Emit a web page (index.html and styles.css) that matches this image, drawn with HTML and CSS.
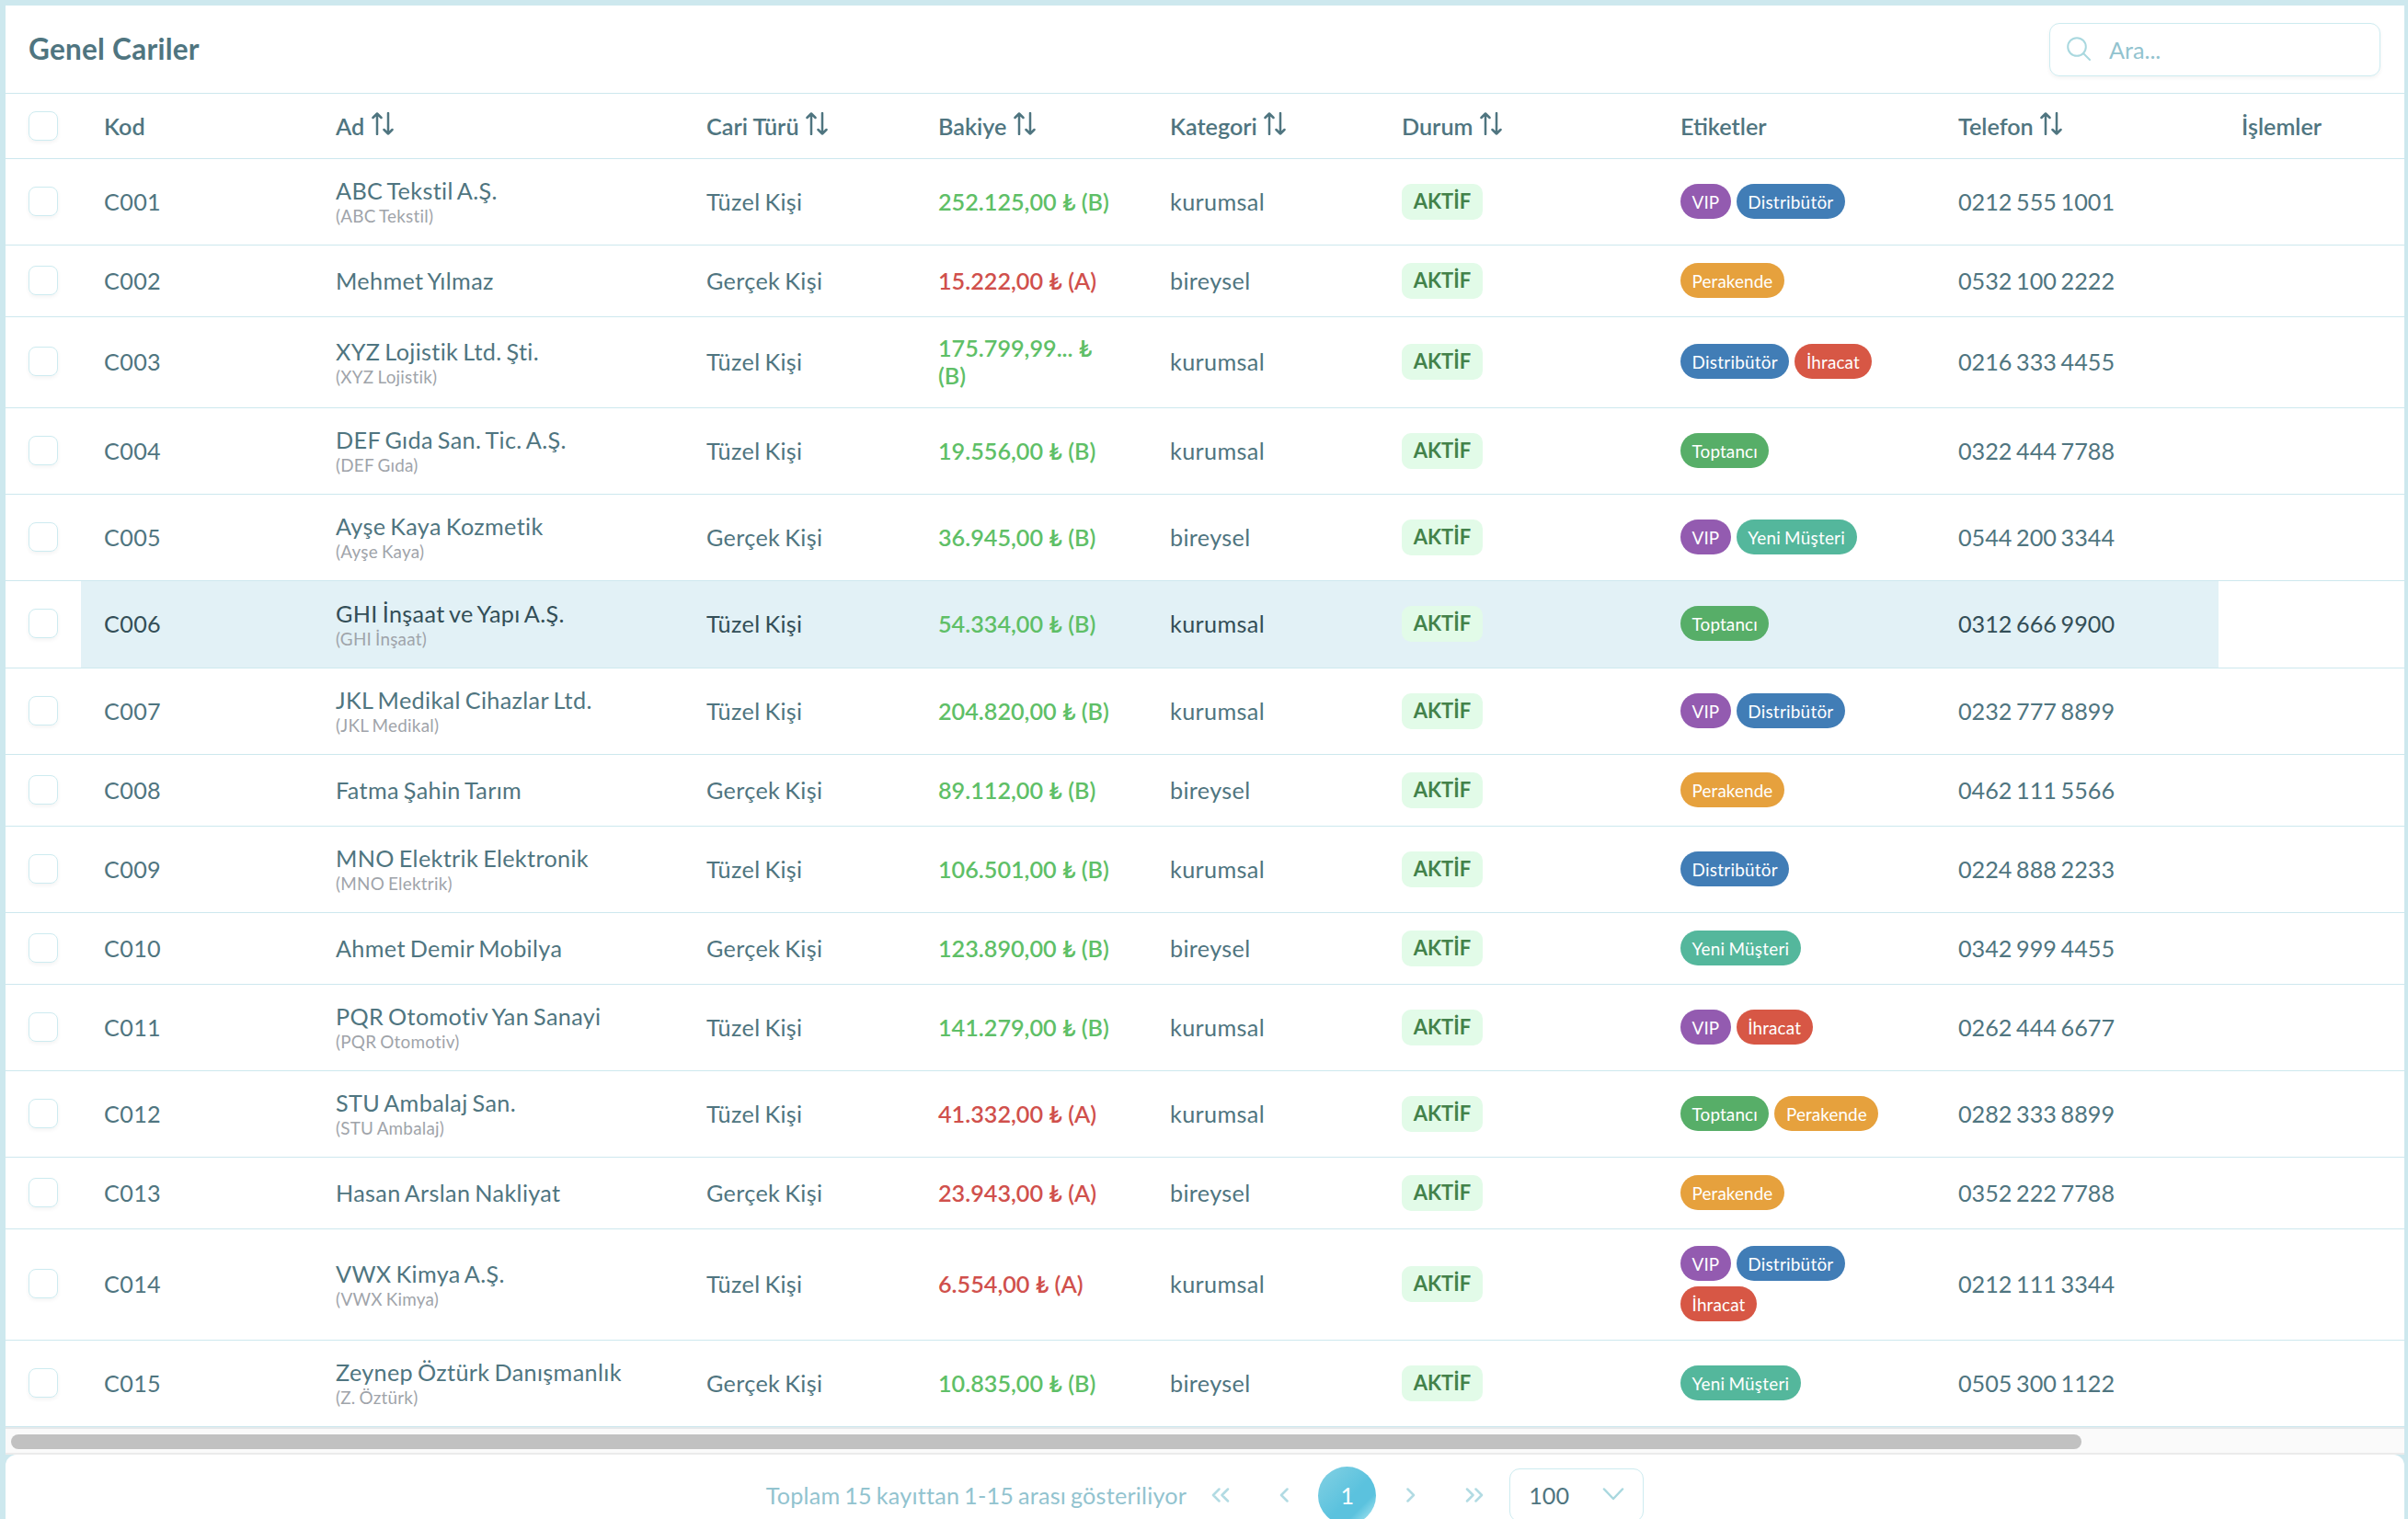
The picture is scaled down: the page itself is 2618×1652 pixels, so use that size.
FILE: index.html
```html
<!DOCTYPE html>
<html lang="tr">
<head>
<meta charset="utf-8">
<title>Genel Cariler</title>
<link rel="stylesheet" href="styles.css">
</head>
<body>
<svg class="defs" aria-hidden="true">
  <symbol id="sort" viewBox="0 0 24 25"><path d="M6 24V1.500M1.500 6L6 1.500 10.500 6M18 1v22.500M13.500 19l4.500 4.500L22.500 19"/></symbol>
</svg>
<main class="panel">
  <header class="toolbar">
    <h1 class="title">Genel Cariler</h1>
    <label class="search">
      <svg class="search-icon" viewBox="0 0 26 26"><circle cx="11" cy="11" r="9.800"/><path d="M18 18l7 7"/></svg>
      <input class="search-input" type="text" placeholder="Ara...">
    </label>
  </header>
  <table class="grid">
    <colgroup><col class="c-check"><col class="c-m"><col class="c-name"><col class="c-m"><col class="c-m"><col class="c-m"><col class="c-status"><col class="c-tags"><col class="c-phone"><col></colgroup>
    <thead>
      <tr><th><span class="check"></span></th><th>Kod</th><th>Ad <svg class="sort"><use href="#sort"/></svg></th><th>Cari Türü <svg class="sort"><use href="#sort"/></svg></th><th>Bakiye <svg class="sort"><use href="#sort"/></svg></th><th>Kategori <svg class="sort"><use href="#sort"/></svg></th><th>Durum <svg class="sort"><use href="#sort"/></svg></th><th>Etiketler</th><th>Telefon <svg class="sort"><use href="#sort"/></svg></th><th>İşlemler</th></tr>
    </thead>
    <tbody>
      <tr><td><span class="check"></span></td><td>C001</td><td class="name">ABC Tekstil A.Ş.<small>(ABC Tekstil)</small></td><td>Tüzel Kişi</td><td class="credit">252.125,00 ₺ (B)</td><td>kurumsal</td><td><span class="status">AKTİF</span></td><td><div class="tags"><span class="tag vip">VIP</span><span class="tag dist">Distribütör</span></div></td><td class="phone">0212 555 1001</td><td></td></tr>
      <tr class="short"><td><span class="check"></span></td><td>C002</td><td>Mehmet Yılmaz</td><td>Gerçek Kişi</td><td class="debit">15.222,00 ₺ (A)</td><td>bireysel</td><td><span class="status">AKTİF</span></td><td><div class="tags"><span class="tag retail">Perakende</span></div></td><td class="phone">0532 100 2222</td><td></td></tr>
      <tr class="wrapped"><td><span class="check"></span></td><td>C003</td><td class="name">XYZ Lojistik Ltd. Şti.<small>(XYZ Lojistik)</small></td><td>Tüzel Kişi</td><td class="credit">175.799,99... ₺ (B)</td><td>kurumsal</td><td><span class="status">AKTİF</span></td><td><div class="tags"><span class="tag dist">Distribütör</span><span class="tag export">İhracat</span></div></td><td class="phone">0216 333 4455</td><td></td></tr>
      <tr><td><span class="check"></span></td><td>C004</td><td class="name">DEF Gıda San. Tic. A.Ş.<small>(DEF Gıda)</small></td><td>Tüzel Kişi</td><td class="credit">19.556,00 ₺ (B)</td><td>kurumsal</td><td><span class="status">AKTİF</span></td><td><div class="tags"><span class="tag whole">Toptancı</span></div></td><td class="phone">0322 444 7788</td><td></td></tr>
      <tr><td><span class="check"></span></td><td>C005</td><td class="name">Ayşe Kaya Kozmetik<small>(Ayşe Kaya)</small></td><td>Gerçek Kişi</td><td class="credit">36.945,00 ₺ (B)</td><td>bireysel</td><td><span class="status">AKTİF</span></td><td><div class="tags"><span class="tag vip">VIP</span><span class="tag new">Yeni Müşteri</span></div></td><td class="phone">0544 200 3344</td><td></td></tr>
      <tr class="hovered"><td><span class="check"></span></td><td>C006</td><td class="name">GHI İnşaat ve Yapı A.Ş.<small>(GHI İnşaat)</small></td><td>Tüzel Kişi</td><td class="credit">54.334,00 ₺ (B)</td><td>kurumsal</td><td><span class="status">AKTİF</span></td><td><div class="tags"><span class="tag whole">Toptancı</span></div></td><td class="phone">0312 666 9900</td><td></td></tr>
      <tr><td><span class="check"></span></td><td>C007</td><td class="name">JKL Medikal Cihazlar Ltd.<small>(JKL Medikal)</small></td><td>Tüzel Kişi</td><td class="credit">204.820,00 ₺ (B)</td><td>kurumsal</td><td><span class="status">AKTİF</span></td><td><div class="tags"><span class="tag vip">VIP</span><span class="tag dist">Distribütör</span></div></td><td class="phone">0232 777 8899</td><td></td></tr>
      <tr class="short"><td><span class="check"></span></td><td>C008</td><td>Fatma Şahin Tarım</td><td>Gerçek Kişi</td><td class="credit">89.112,00 ₺ (B)</td><td>bireysel</td><td><span class="status">AKTİF</span></td><td><div class="tags"><span class="tag retail">Perakende</span></div></td><td class="phone">0462 111 5566</td><td></td></tr>
      <tr><td><span class="check"></span></td><td>C009</td><td class="name">MNO Elektrik Elektronik<small>(MNO Elektrik)</small></td><td>Tüzel Kişi</td><td class="credit">106.501,00 ₺ (B)</td><td>kurumsal</td><td><span class="status">AKTİF</span></td><td><div class="tags"><span class="tag dist">Distribütör</span></div></td><td class="phone">0224 888 2233</td><td></td></tr>
      <tr class="short"><td><span class="check"></span></td><td>C010</td><td>Ahmet Demir Mobilya</td><td>Gerçek Kişi</td><td class="credit">123.890,00 ₺ (B)</td><td>bireysel</td><td><span class="status">AKTİF</span></td><td><div class="tags"><span class="tag new">Yeni Müşteri</span></div></td><td class="phone">0342 999 4455</td><td></td></tr>
      <tr><td><span class="check"></span></td><td>C011</td><td class="name">PQR Otomotiv Yan Sanayi<small>(PQR Otomotiv)</small></td><td>Tüzel Kişi</td><td class="credit">141.279,00 ₺ (B)</td><td>kurumsal</td><td><span class="status">AKTİF</span></td><td><div class="tags"><span class="tag vip">VIP</span><span class="tag export">İhracat</span></div></td><td class="phone">0262 444 6677</td><td></td></tr>
      <tr><td><span class="check"></span></td><td>C012</td><td class="name">STU Ambalaj San.<small>(STU Ambalaj)</small></td><td>Tüzel Kişi</td><td class="debit">41.332,00 ₺ (A)</td><td>kurumsal</td><td><span class="status">AKTİF</span></td><td><div class="tags"><span class="tag whole">Toptancı</span><span class="tag retail">Perakende</span></div></td><td class="phone">0282 333 8899</td><td></td></tr>
      <tr class="short"><td><span class="check"></span></td><td>C013</td><td>Hasan Arslan Nakliyat</td><td>Gerçek Kişi</td><td class="debit">23.943,00 ₺ (A)</td><td>bireysel</td><td><span class="status">AKTİF</span></td><td><div class="tags"><span class="tag retail">Perakende</span></div></td><td class="phone">0352 222 7788</td><td></td></tr>
      <tr class="tall"><td><span class="check"></span></td><td>C014</td><td class="name">VWX Kimya A.Ş.<small>(VWX Kimya)</small></td><td>Tüzel Kişi</td><td class="debit">6.554,00 ₺ (A)</td><td>kurumsal</td><td><span class="status">AKTİF</span></td><td><div class="tags"><span class="tag vip">VIP</span><span class="tag dist">Distribütör</span><span class="tag export">İhracat</span></div></td><td class="phone">0212 111 3344</td><td></td></tr>
      <tr><td><span class="check"></span></td><td>C015</td><td class="name">Zeynep Öztürk Danışmanlık<small>(Z. Öztürk)</small></td><td>Gerçek Kişi</td><td class="credit">10.835,00 ₺ (B)</td><td>bireysel</td><td><span class="status">AKTİF</span></td><td><div class="tags"><span class="tag new">Yeni Müşteri</span></div></td><td class="phone">0505 300 1122</td><td></td></tr>
    </tbody>
  </table>
  <div class="scrollbar"><div class="thumb"></div></div>
  <footer class="pager">
    <span class="report">Toplam 15 kayıttan 1-15 arası gösteriliyor</span>
    <button class="nav"><svg viewBox="0 0 20 16"><path d="M8.500 1.500L2 8l6.500 6.500M18 1.500L11.500 8l6.500 6.500"/></svg></button>
    <button class="nav"><svg viewBox="0 0 20 16"><path d="M13.500 1.500L7 8l6.500 6.500"/></svg></button>
    <button class="nav current">1</button>
    <button class="nav"><svg viewBox="0 0 20 16"><path d="M6.500 1.500L13 8l-6.500 6.500"/></svg></button>
    <button class="nav"><svg viewBox="0 0 20 16"><path d="M2 1.500L8.500 8 2 14.500M11.500 1.500L18 8l-6.500 6.500"/></svg></button>
    <div class="select">100<svg class="caret" viewBox="0 0 24 14"><path d="M2 1.500L12 12 22 1.500"/></svg></div>
  </footer>
</main>
</body>
</html>
```

FILE: styles.css
```css
* { box-sizing: border-box; }
html, body { height: 100%; overflow: hidden; }
body {
  margin: 0;
  padding: 6px 4px 0 6px;
  background: #cde8ee;
  color: #4f7580;
  font: 25.2px/30px Lato, "Open Sans", sans-serif;
}
.defs { display: none; }
svg { fill: none; stroke: currentColor; stroke-linecap: round; stroke-linejoin: round; }

.toolbar {
  display: flex;
  align-items: center;
  justify-content: space-between;
  height: 96px;
  padding: 0 26px 0 25px;
  background: #fff;
  border-bottom: 1px solid #cde8ee;
}
.title { margin: 0 0 2px; font-size: 31.500px; font-weight: 700; letter-spacing: .25px; }
.search {
  display: flex;
  align-items: center;
  gap: 20px;
  width: 360px;
  height: 58px;
  padding: 0 18px 2px;
  border: 1.500px solid #cdebf0;
  border-radius: 11px;
  box-shadow: 0 2px 4px rgba(18, 18, 23, .05);
}
.search-icon { width: 26px; height: 26px; color: #a9d8df; stroke-width: 2; }
.search-input {
  width: 240px;
  border: 0;
  padding: 2px 0 0;
  outline: 0;
  background: none;
  font: inherit;
}
.search-input::placeholder { color: #92c3cf; }

.grid {
  width: 2608px;
  table-layout: fixed;
  border-collapse: separate;
  border-spacing: 0;
  background: #fff;
}
.c-check { width: 82px; }
.c-m { width: 252px; }
.c-name { width: 403px; }
.c-status { width: 303px; }
.c-tags { width: 302px; }
.c-phone { width: 308px; }
tr { height: 94px; }
thead tr { height: 71px; }
.short { height: 78px; }
.wrapped { height: 99px; }
.tall { height: 121px; }
.hovered { height: 95px; }
th, td {
  padding: 0 25px;
  border-bottom: 1px solid #cde8ee;
  text-align: left;
  vertical-align: middle;
  font-weight: 400;
}
td { padding-bottom: 2px; letter-spacing: .35px; word-spacing: -1.800px; }
th { font-weight: 600; white-space: nowrap; }
.name { padding-bottom: 0; }
small {
  display: block;
  margin-top: 1px;
  color: #9fa4aa;
  font-size: 18.900px;
  line-height: 24px;
  letter-spacing: .22px;
  word-spacing: -1px;
}
.hovered { color: #334e57; }
.hovered td:not(:first-child, :last-child) { background: #e2f1f6; }
.credit, .debit { font-weight: 600; letter-spacing: 0; word-spacing: 0; }
.credit { color: #5fbf67; }
.debit { color: #d0504c; }
.phone { letter-spacing: 0; }
.sort { width: 24px; height: 25px; margin-left: 1px; stroke-width: 2.500; vertical-align: 0; }
.check {
  display: block;
  width: 32px;
  height: 32px;
  border: 1.500px solid #cdebf0;
  border-radius: 8px;
  box-shadow: 0 2px 4px rgba(18, 18, 23, .05);
}
.status {
  display: block;
  width: 88px;
  height: 39px;
  margin-top: 1px;
  border-radius: 10px;
  background: #e2fbe8;
  color: #43824a;
  font-size: 22px;
  font-weight: 700;
  line-height: 38px;
  letter-spacing: 0;
  text-align: center;
}
.tags { display: flex; flex-wrap: wrap; gap: 6px; }
.tag {
  height: 38px;
  padding: 0 12.600px;
  border-radius: 19px;
  color: #fff;
  font-size: 18.900px;
  line-height: 39px;
  letter-spacing: .25px;
  word-spacing: -1px;
}
.vip { background: #935bb0; letter-spacing: 0; }
.dist { background: #417db6; }
.retail { background: #e6a13d; letter-spacing: .08px; }
.export { background: #d75745; letter-spacing: .15px; }
.whole { background: #57ae68; letter-spacing: .12px; }
.new { background: #54b79c; }

.scrollbar {
  height: 30px;
  padding: 6px 6px 0;
  background: #fafafa;
  border-top: 2px solid #e5e9eb;
  border-bottom: 2px solid #ebebeb;
}
.thumb { width: 2251px; height: 16px; border-radius: 8px; background: #c1c1c1; }

.pager {
  display: flex;
  align-items: center;
  justify-content: center;
  height: 88px;
  border-radius: 12px 12px 0 0;
  background: #fff;
  color: #92c3cf;
}
.nav {
  display: flex;
  align-items: center;
  justify-content: center;
  width: 63px;
  height: 63px;
  margin-right: 6px;
  padding: 0;
  border: 0;
  border-radius: 50%;
  background: none;
  color: #b2dbe3;
  font: inherit;
}
.nav svg { width: 20px; height: 16px; stroke-width: 2.500; }
.nav.current { background: linear-gradient(135deg, #84d1e3, #5bc2de 55%, #5bc2de 72%, #9be0ee 90%); color: #fff; }
.report { margin-right: 5px; letter-spacing: .22px; word-spacing: -1.800px; }
.select {
  display: flex;
  align-items: center;
  justify-content: space-between;
  width: 146px;
  height: 58px;
  margin-left: 1px;
  padding: 0 20px;
  border: 1.500px solid #cdebf0;
  border-radius: 11px;
  color: #4f7580;
}
.caret { width: 24px; height: 14px; margin-bottom: 2px; color: #a9d8df; stroke-width: 2.500; }
```
